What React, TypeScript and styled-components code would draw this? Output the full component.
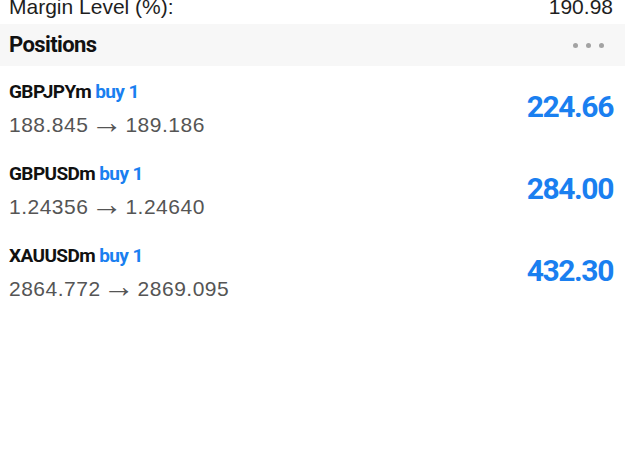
import styled, { createGlobalStyle } from "styled-components";

const GlobalStyle = createGlobalStyle`
  html, body {
    margin: 0;
    padding: 0;
    background: #ffffff;
  }
  body {
    font-family: "Liberation Sans", Arial, sans-serif;
    overflow: hidden;
  }
`;

interface Position {
  symbol: string;
  side: string;
  volume: number;
  open: string;
  current: string;
  profit: string;
}

const positions: Position[] = [
  { symbol: "GBPJPYm", side: "buy", volume: 1, open: "188.845", current: "189.186", profit: "224.66" },
  { symbol: "GBPUSDm", side: "buy", volume: 1, open: "1.24356", current: "1.24640", profit: "284.00" },
  { symbol: "XAUUSDm", side: "buy", volume: 1, open: "2864.772", current: "2869.095", profit: "432.30" },
];

export default function App() {
  return (
    <Screen>
      <GlobalStyle />
      <SummaryRow>
        <SummaryLabel>Margin Level (%):</SummaryLabel>
        <SummaryValue>190.98</SummaryValue>
      </SummaryRow>
      <SectionHeader>
        <SectionTitle>Positions</SectionTitle>
        <MoreButton aria-label="more">
          <Dot />
          <Dot />
          <Dot />
        </MoreButton>
      </SectionHeader>
      <List>
        {positions.map((p) => (
          <PositionRow key={p.symbol}>
            <Info>
              <TitleLine>
                <Symbol>{p.symbol}</Symbol> <Side>{p.side} {p.volume}</Side>
              </TitleLine>
              <PriceLine>
                {p.open}
                <Arrow>→</Arrow>
                {p.current}
              </PriceLine>
            </Info>
            <Profit>{p.profit}</Profit>
          </PositionRow>
        ))}
      </List>
    </Screen>
  );
}

const Screen = styled.div`
  width: 625px;
  height: 455px;
  background: #ffffff;
  overflow: hidden;
`;

const SummaryRow = styled.div`
  height: 29px;
  margin-top: -5px;
  padding: 0 12px 0 9px;
  display: flex;
  justify-content: space-between;
  align-items: flex-start;
  font-size: 21px;
  line-height: 24px;
  color: #1e1e1e;
`;

const SummaryLabel = styled.span``;
const SummaryValue = styled.span``;

const SectionHeader = styled.div`
  height: 42px;
  background: #f7f7f7;
  padding: 0 21px 0 9px;
  display: flex;
  align-items: center;
  justify-content: space-between;
`;

const SectionTitle = styled.div`
  font-family: Roboto, "Liberation Sans", sans-serif;
  font-weight: 700;
  font-size: 22px;
  line-height: 42px;
  letter-spacing: -0.6px;
  color: #111111;
`;

const MoreButton = styled.div`
  display: flex;
  gap: 8px;
  align-items: center;
`;

const Dot = styled.span`
  width: 5px;
  height: 5px;
  border-radius: 50%;
  background: #a3a3a3;
`;

const List = styled.div`
  display: flex;
  flex-direction: column;
`;

const PositionRow = styled.div`
  height: 82px;
  box-sizing: border-box;
  padding: 14px 12px 10px 9px;
  display: flex;
  align-items: center;
  justify-content: space-between;
`;

const Info = styled.div`
  display: flex;
  flex-direction: column;
  gap: 8px;
`;

const TitleLine = styled.div`
  font-family: Roboto, "Liberation Sans", sans-serif;
  font-weight: 700;
  font-size: 19px;
  line-height: 24px;
  letter-spacing: -0.6px;
`;

const Symbol = styled.span`
  color: #111111;
`;

const Side = styled.span`
  color: #1a7ff0;
`;

const PriceLine = styled.div`
  font-size: 21px;
  line-height: 26px;
  color: #555555;
  letter-spacing: 0.5px;
`;

const Arrow = styled.span`
  display: inline-block;
  font-size: 32px;
  line-height: 26px;
  margin: 0 3px 0 2px;
  vertical-align: top;
  position: relative;
  top: -3px;
  letter-spacing: 0;
  color: #555555;
`;

const Profit = styled.div`
  margin-top: -4px;
  font-family: Roboto, "Liberation Sans", sans-serif;
  font-weight: 700;
  font-size: 30px;
  line-height: 36px;
  letter-spacing: -1.4px;
  color: #1a7ff0;
`;
